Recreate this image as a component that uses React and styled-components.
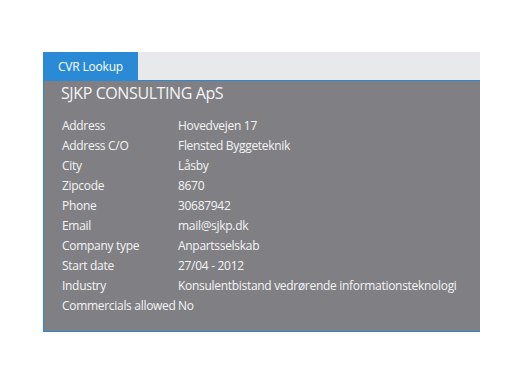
import React from "react";
import styled, { createGlobalStyle } from "styled-components";

const Global = createGlobalStyle`
  html, body { margin: 0; padding: 0; background: #ffffff; }
  body { font-family: "Open Sans", "Noto Sans", sans-serif; }
`;

const Page = styled.div`
  padding: 52px 0 0 43px;
`;

const Panel = styled.div`
  width: 437px;
  display: flex;
  flex-direction: column;
`;

const TabBar = styled.div`
  display: flex;
  height: 28px;
  background: #e8e9eb;
  border-bottom: 1px solid #2b8ad6;
  box-sizing: content-box;
`;

const Tab = styled.div`
  width: 95px;
  height: 29px;
  background: #2b8ad6;
  color: #ffffff;
  font-size: 12px;
  letter-spacing: -0.2px;
  line-height: 29px;
  padding-left: 15px;
  box-sizing: border-box;
`;

const Body = styled.div`
  background: #808084;
  border-left: 1px solid #2b8ad6;
  border-bottom: 1px solid #2b8ad6;
  height: 251px;
  box-sizing: border-box;
  padding: 0 0 0 17px;
  color: #f4f4f4;
`;

const Title = styled.div`
  font-size: 16px;
  letter-spacing: -0.4px;
  line-height: 24px;
`;

const Table = styled.div`
  margin-top: 11px;
  padding-left: 1px;
  display: grid;
  grid-template-columns: 116px auto;
  grid-auto-rows: 20px;
  font-size: 12px;
  letter-spacing: -0.3px;
  line-height: 20px;
`;

const Cell = styled.div`
  white-space: nowrap;
`;

const rows = [
  ["Address", "Hovedvejen 17"],
  ["Address C/O", "Flensted Byggeteknik"],
  ["City", "Låsby"],
  ["Zipcode", "8670"],
  ["Phone", "30687942"],
  ["Email", "mail@sjkp.dk"],
  ["Company type", "Anpartsselskab"],
  ["Start date", "27/04 - 2012"],
  ["Industry", "Konsulentbistand vedrørende informationsteknologi"],
  ["Commercials allowed", "No"],
];

export default function App() {
  return (
    <Page>
      <Global />
      <Panel>
        <TabBar>
          <Tab>CVR Lookup</Tab>
        </TabBar>
        <Body>
          <Title>SJKP CONSULTING ApS</Title>
          <Table>
            {rows.map(([k, v]) => (
              <React.Fragment key={k}>
                <Cell>{k}</Cell>
                <Cell>{v}</Cell>
              </React.Fragment>
            ))}
          </Table>
        </Body>
      </Panel>
    </Page>
  );
}
